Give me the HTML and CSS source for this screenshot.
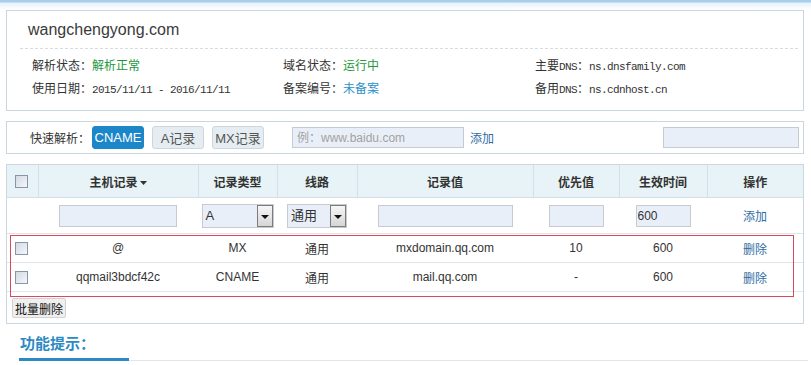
FILE: index.html
```html
<!DOCTYPE html>
<html lang="zh-CN">
<head>
  <meta charset="UTF-8" />
  <title>解析记录 - wangchengyong.com</title>
  <link rel="stylesheet" href="styles.css">
</head>
<body>

<div class="box domain-info">
  <h1 class="domain-name">wangchengyong.com</h1>
  <div class="info-grid">
    <div>解析状态：<span class="ok">解析正常</span></div>
    <div>域名状态：<span class="ok">运行中</span></div>
    <div>主要<span class="mono">DNS</span>：<span class="mono">ns.dnsfamily.com</span></div>
    <div>使用日期：<span class="mono">2015/11/11 - 2016/11/11</span></div>
    <div>备案编号：<span class="blue">未备案</span></div>
    <div>备用<span class="mono">DNS</span>：<span class="mono">ns.cdnhost.cn</span></div>
  </div>
</div>

<div class="box quick-bar">
  <span class="quick-label">快速解析：</span>
  <button class="qbtn active">CNAME</button>
  <button class="qbtn">A记录</button>
  <button class="qbtn">MX记录</button>
  <input class="txt quick-input" type="text" placeholder="例：www.baidu.com" />
  <a class="op-link add-link">添加</a>
  <input class="txt search-input" type="text" />
</div>

<div class="box records">
  <table>
    <colgroup>
      <col style="width:31px">
      <col style="width:160px">
      <col style="width:79px">
      <col style="width:80px">
      <col style="width:176px">
      <col style="width:86px">
      <col style="width:88px">
      <col style="width:96px">
    </colgroup>
    <thead>
      <tr>
        <th class="cb-cell"><span class="cb"></span></th>
        <th>主机记录<svg class="sort" width="7" height="4" viewBox="0 0 7 4"><polygon points="0,0 7,0 3.5,4" fill="#333"/></svg></th>
        <th>记录类型</th>
        <th>线路</th>
        <th>记录值</th>
        <th>优先值</th>
        <th>生效时间</th>
        <th>操作</th>
      </tr>
    </thead>
    <tbody>
      <tr class="add-row">
        <td></td>
        <td><input class="txt w-host" type="text" /></td>
        <td><span class="sel w-type"><span class="sel-text">A</span><span class="sel-arrow"></span></span></td>
        <td><span class="sel w-line"><span class="sel-text">通用</span><span class="sel-arrow"></span></span></td>
        <td><input class="txt w-value" type="text" /></td>
        <td><input class="txt w-small" type="text" /></td>
        <td><input class="txt w-small ttl" type="text" value="600" /></td>
        <td><a class="op-link">添加</a></td>
      </tr>
      <tr class="data-row">
        <td class="cb-cell"><span class="cb"></span></td>
        <td>@</td>
        <td>MX</td>
        <td>通用</td>
        <td>mxdomain.qq.com</td>
        <td>10</td>
        <td>600</td>
        <td><a class="op-link">删除</a></td>
      </tr>
      <tr class="data-row">
        <td class="cb-cell"><span class="cb"></span></td>
        <td>qqmail3bdcf42c</td>
        <td>CNAME</td>
        <td>通用</td>
        <td>mail.qq.com</td>
        <td>-</td>
        <td>600</td>
        <td><a class="op-link">删除</a></td>
      </tr>
    </tbody>
  </table>
  <div class="records-foot">
    <button class="batch-btn">批量删除</button>
  </div>
  <div class="highlight"></div>
</div>

<div class="tips">
  <h3>功能提示：</h3>
</div>

</body>
</html>
```

FILE: styles.css
```css
body {
  margin: 0;
  padding: 10px 7px 0 6px;
  font-family: "Liberation Sans", Arial, "Noto Sans CJK SC", sans-serif;
  font-size: 12px;
  color: #333;
  background: #fff linear-gradient(#a6cfea 0, #a6cfea 2px, #e6f2fa 3px, #fff 10px) no-repeat;
}
.box {
  border: 1px solid #cbd7df;
  background: #fff;
}
.box + .box {
  margin-top: 10px;
}

/* domain info */
.domain-name {
  margin: 0 5px 0 13px;
  padding: 8px 0 7px 8px;
  font-size: 16px;
  font-weight: normal;
  line-height: 22px;
  color: #3a3a3a;
  border-bottom: 1px dashed #d5dde3;
}
.info-grid {
  display: grid;
  grid-template-columns: 251px 252px 1fr;
  padding: 6px 0 9px 25px;
  line-height: 22px;
}
.ok {
  color: #22983b;
}
.blue {
  color: #2a90c8;
}
.mono {
  font-family: "Liberation Mono", monospace;
  font-size: 11px;
  letter-spacing: -0.6px;
}

/* quick bar */
.quick-bar {
  display: flex;
  align-items: center;
  height: 31px;
  padding: 0 4px 0 23px;
}
.quick-label {
  margin-right: 2px;
}
.qbtn {
  width: 52px;
  height: 23px;
  margin-right: 8px;
  padding: 0;
  border: 1px solid #cdd6dd;
  border-radius: 3px;
  background: #e6edf2;
  color: #555;
  font-family: inherit;
  font-size: 13px;
  cursor: pointer;
}
.qbtn.active {
  background: #1b87c8;
  border-color: #1b87c8;
  color: #fff;
}
.txt {
  box-sizing: border-box;
  height: 22px;
  padding: 0 4px;
  border: 1px solid #c6cbd1;
  background: #e9eff8;
  font-family: inherit;
  font-size: 12px;
  color: #333;
  vertical-align: middle;
}
.txt::placeholder {
  color: #a2a2a2;
}
.quick-input {
  width: 172px;
  height: 21px;
  margin-left: 20px;
}
.add-link {
  margin-left: 6px;
}
.search-input {
  width: 136px;
  height: 21px;
  margin-left: auto;
}
.op-link {
  color: #2f6da3;
  cursor: pointer;
}

/* records table */
.records {
  position: relative;
}
table {
  width: 100%;
  border-collapse: collapse;
  table-layout: fixed;
}
th {
  height: 32px;
  padding: 0;
  background: #e8f3f7;
  border-right: 1px solid #d2e1e8;
  border-bottom: 1px solid #d2e1e8;
  font-weight: bold;
  font-size: 12px;
}
th:last-child {
  border-right: 0;
}
td {
  padding: 0;
  text-align: center;
  border-bottom: 1px solid #e2e6ea;
}
.add-row td {
  height: 35px;
  border-bottom-color: #dfe4e8;
}
.data-row td {
  height: 28px;
}
.cb-cell {
  text-align: left;
  padding-left: 8px;
}
.cb {
  display: inline-block;
  box-sizing: border-box;
  width: 13px;
  height: 13px;
  border: 1px solid #8695a9;
  background: linear-gradient(135deg, #d3dae3, #f5f7fa);
  vertical-align: middle;
}
.sort {
  margin-left: 2px;
  vertical-align: middle;
}
.w-host {
  width: 118px;
}
.w-value {
  width: 135px;
}
.w-small {
  width: 55px;
}
.ttl {
  padding-left: 1px;
}
.sel {
  display: inline-flex;
  box-sizing: border-box;
  height: 24px;
  border: 1px solid #c6cbd1;
  background: #e9eff8;
  vertical-align: middle;
  text-align: left;
}
.w-type {
  width: 72px;
}
.w-line {
  width: 60px;
}
.sel-text {
  flex: 1;
  padding-left: 3px;
  line-height: 22px;
  font-size: 13px;
}
.sel-arrow {
  position: relative;
  box-sizing: border-box;
  width: 16px;
  border: 1px solid #7c7c7c;
  background: linear-gradient(#f6f6f6, #d6d6d6);
}
.sel-arrow::after {
  content: "";
  position: absolute;
  left: 3px;
  top: 9px;
  border-left: 4px solid transparent;
  border-right: 4px solid transparent;
  border-top: 4px solid #111;
}
.records-foot {
  padding: 6px 5px 5px;
}
.batch-btn {
  height: 20px;
  padding: 0 2px;
  border: 1px solid #d2d2d2;
  border-radius: 2px;
  background: #efefef;
  color: #111;
  font-family: inherit;
  font-size: 12px;
}
.highlight {
  position: absolute;
  left: 3px;
  top: 70px;
  width: 784px;
  height: 62px;
  box-sizing: border-box;
  border: 1px solid #d64a5c;
  pointer-events: none;
}

/* tips */
.tips {
  margin: 9px -4px 0 13px;
  border-bottom: 1px solid #e2e7eb;
}
.tips h3 {
  box-sizing: border-box;
  width: 110px;
  margin: 0 0 -1px;
  padding: 0 0 3px 1px;
  font-size: 15px;
  line-height: 22px;
  color: #2c8ac3;
  border-bottom: 3px solid #2c8ac3;
}
```
